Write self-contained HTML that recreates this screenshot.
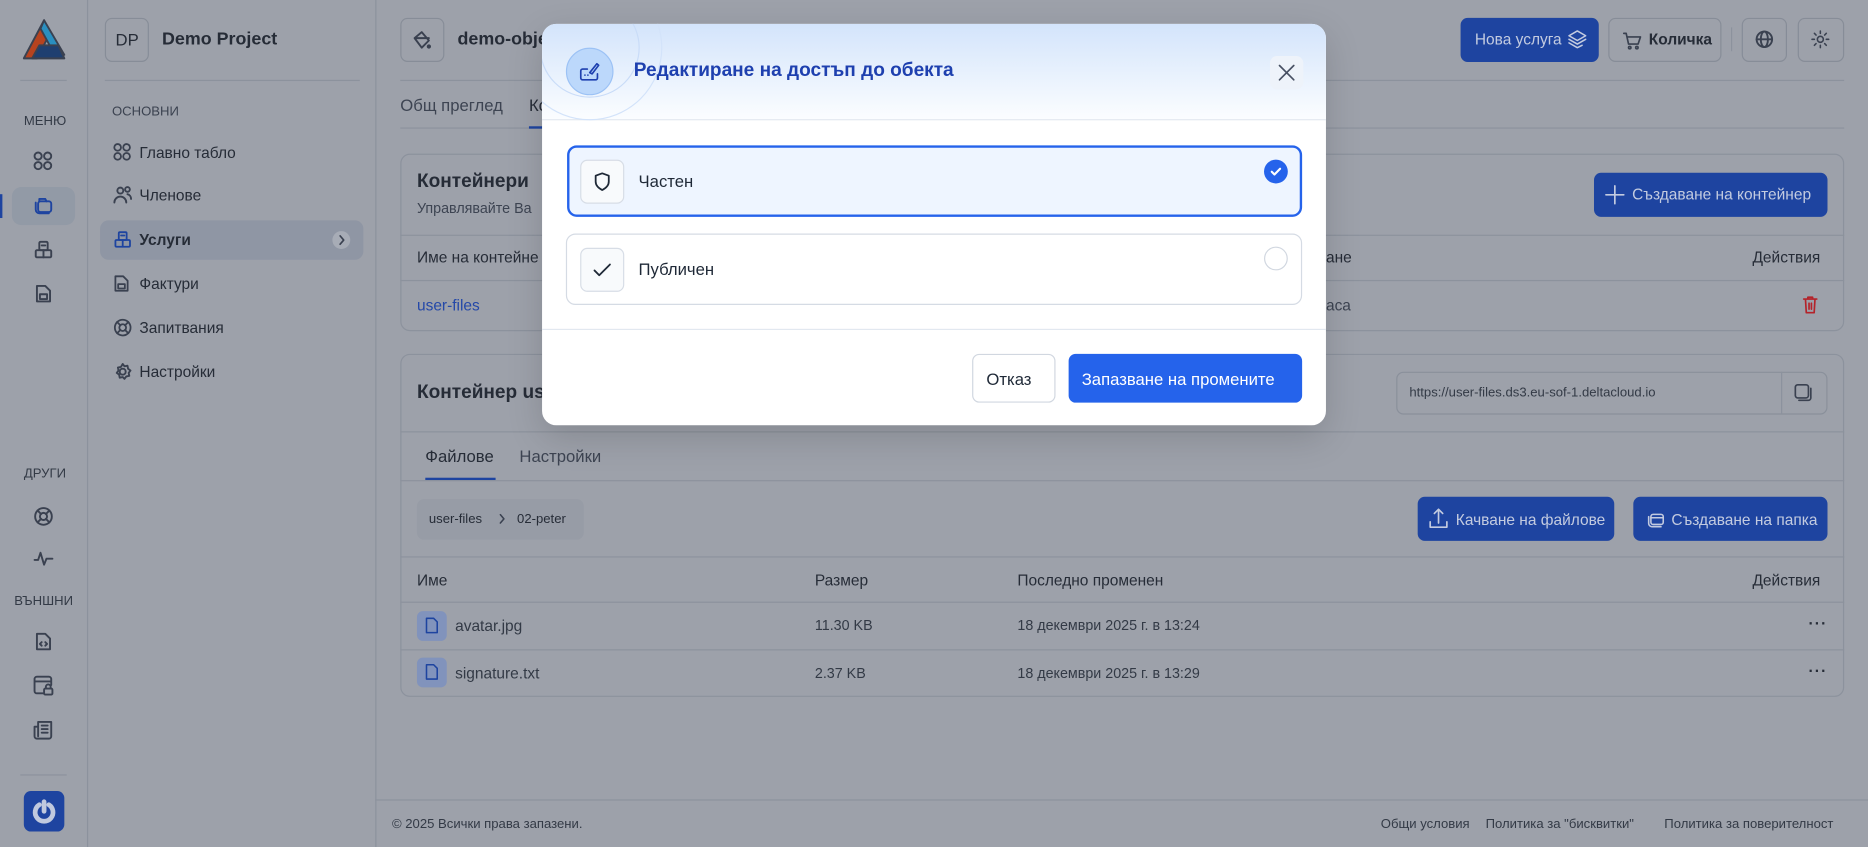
<!DOCTYPE html>
<html><head><meta charset="utf-8"><style>
*{box-sizing:border-box;margin:0;padding:0}
html,body{width:1868px;height:847px;overflow:hidden;background:#9da1aa}
#w{position:absolute;left:0;top:0;width:1568px;height:711px;transform:scale(1.19133);transform-origin:0 0;font-family:"Liberation Sans","DejaVu Sans",sans-serif;color:#262c37;background:#9da1aa}
.a{position:absolute}
.t{position:absolute;white-space:nowrap;transform:translateY(-50%)}
.hl{position:absolute;height:1px;background:#8c929d}
.vl{position:absolute;width:1px;background:#8c929d}
svg{position:absolute;fill:none;stroke:#3a4150;stroke-width:1.6;stroke-linecap:round;stroke-linejoin:round}
.btn{position:absolute;background:#1e44a0;border-radius:6px;color:#c3cbe0;font-size:13px}
.ob{position:absolute;border:1px solid #878d98;border-radius:6px}
.card{position:absolute;border:1px solid #8c929d;border-radius:8px}
</style></head><body><div id="w">
<!-- rail -->
<div class="vl" style="left:73px;top:0;height:711px"></div>
<svg style="left:19px;top:16px" width="36" height="34" viewBox="0 0 36 34" stroke="none"><polygon points="18,1 1,33 12,33 22,14" fill="#b6431f"/><polygon points="18,1 35,30 27,30 15,8" fill="#2a8fc0"/><polygon points="8,33 35,33 30,22 14,22" fill="#1f3f70"/></svg>
<div class="hl" style="left:17px;top:67px;width:39px"></div>
<div class="t" style="left:20px;top:102px;font-size:11px;color:#333a46">МЕНЮ</div>
<svg style="left:28px;top:127px" width="16" height="16" viewBox="0 0 16 16"><circle cx="4" cy="4" r="3"/><circle cx="12" cy="4" r="3"/><circle cx="4" cy="12" r="3"/><circle cx="12" cy="12" r="3"/></svg>
<div class="a" style="left:10px;top:157px;width:53px;height:32px;background:#929aa6;border-radius:8px"></div>
<div class="a" style="left:0;top:163px;width:2px;height:20px;background:#1e44a0"></div>
<svg style="left:28px;top:164px;stroke:#1e44a0" width="17" height="17" viewBox="0 0 17 17"><rect x="4" y="5" width="11" height="9" rx="2"/><path d="M2 6v6a3 3 0 0 0 3 3h8M5 5V3h5l1 2"/></svg>
<svg style="left:28px;top:201px" width="17" height="17" viewBox="0 0 17 17"><rect x="2" y="9" width="13" height="6" rx="1"/><rect x="5" y="2" width="7" height="7" rx="1"/><path d="M8.5 9v6M7 5h3"/></svg>
<svg style="left:29px;top:238px" width="15" height="17" viewBox="0 0 15 17"><path d="M2 2h7l4 4v9H2z"/><rect x="4.5" y="9" width="6" height="4"/></svg>
<div class="t" style="left:20px;top:398px;font-size:11px;color:#333a46">ДРУГИ</div>
<svg style="left:28px;top:425px" width="17" height="17" viewBox="0 0 17 17"><circle cx="8.5" cy="8.5" r="7"/><circle cx="8.5" cy="8.5" r="3"/><path d="M3.5 3.5l3 3M13.5 3.5l-3 3M3.5 13.5l3-3M13.5 13.5l-3-3"/></svg>
<svg style="left:28px;top:462px" width="17" height="14" viewBox="0 0 17 14"><path d="M1 8h3l2-6 3 10 2-5h5"/></svg>
<div class="t" style="left:12px;top:505px;font-size:11px;color:#333a46">ВЪНШНИ</div>
<svg style="left:29px;top:530px" width="15" height="17" viewBox="0 0 15 17"><path d="M2 2h7l4 4v9H2z"/><path d="M6 9l-1.5 1.5L6 12M9 9l1.5 1.5L9 12"/></svg>
<svg style="left:28px;top:567px" width="17" height="17" viewBox="0 0 17 17"><path d="M8 15H3a2 2 0 0 1-2-2V3a2 2 0 0 1 2-2h10a2 2 0 0 1 2 2v5M1 5h14"/><rect x="9" y="11" width="7" height="5" rx="1"/><path d="M10.5 11V9.5a2 2 0 0 1 4 0V11"/></svg>
<svg style="left:28px;top:604px" width="17" height="17" viewBox="0 0 17 17"><path d="M4 2h11v12a2 2 0 0 1-2 2H3a2 2 0 0 1-2-2V6h3zM4 6v8M7 5h5M7 8h5M7 11h5"/></svg>
<div class="hl" style="left:17px;top:650px;width:39px"></div>
<div class="a" style="left:20px;top:664px;width:34px;height:34px;background:#1e44a0;border-radius:6px"></div>
<svg style="left:26px;top:670px;stroke:#c0c9de;stroke-width:4" width="22" height="22" viewBox="0 0 22 22"><path d="M7 5.5a7.5 7.5 0 1 0 8 0M11 3v8"/></svg>
<!-- sidebar -->
<div class="vl" style="left:315px;top:0;height:711px"></div>
<div class="ob" style="left:88px;top:15px;width:37px;height:37px"></div>
<div class="t" style="left:97px;top:33px;font-size:14px">DP</div>
<div class="t" style="left:136px;top:33px;font-size:15px;font-weight:600">Demo Project</div>
<div class="hl" style="left:88px;top:67px;width:214px"></div>
<div class="t" style="left:94px;top:94px;font-size:11px;color:#3b4250">ОСНОВНИ</div>
<svg style="left:95px;top:120px" width="15" height="15" viewBox="0 0 16 16"><circle cx="4" cy="4" r="3"/><circle cx="12" cy="4" r="3"/><circle cx="4" cy="12" r="3"/><circle cx="12" cy="12" r="3"/></svg>
<div class="t" style="left:117px;top:128px;font-size:13px">Главно табло</div>
<svg style="left:95px;top:156px" width="16" height="15" viewBox="0 0 16 15"><circle cx="6" cy="4" r="2.5"/><path d="M1 14a5 5 0 0 1 10 0"/><circle cx="12" cy="3" r="2"/><path d="M12 7a4 4 0 0 1 3 4"/></svg>
<div class="t" style="left:117px;top:164px;font-size:13px">Членове</div>
<div class="a" style="left:84px;top:185px;width:221px;height:33px;background:#8f96a4;border-radius:7px"></div>
<svg style="left:95px;top:193px;stroke:#1e44a0" width="16" height="16" viewBox="0 0 17 17"><rect x="2" y="9" width="13" height="6" rx="1"/><rect x="5" y="2" width="7" height="7" rx="1"/><path d="M8.5 9v6M7 5h3"/></svg>
<div class="t" style="left:117px;top:201px;font-size:13px;font-weight:600">Услуги</div>
<div class="a" style="left:279px;top:194px;width:15px;height:15px;border-radius:50%;background:#a7acb6"></div>
<svg style="left:283px;top:197px;stroke-width:1.4" width="8" height="9" viewBox="0 0 8 9"><path d="M2.5 1l3 3.5-3 3.5"/></svg>
<svg style="left:95px;top:230px" width="14" height="16" viewBox="0 0 15 17"><path d="M2 2h7l4 4v9H2z"/><rect x="4.5" y="9" width="6" height="4"/></svg>
<div class="t" style="left:117px;top:238px;font-size:13px">Фактури</div>
<svg style="left:95px;top:267px" width="16" height="16" viewBox="0 0 17 17"><circle cx="8.5" cy="8.5" r="7"/><circle cx="8.5" cy="8.5" r="3"/><path d="M3.5 3.5l3 3M13.5 3.5l-3 3M3.5 13.5l3-3M13.5 13.5l-3-3"/></svg>
<div class="t" style="left:117px;top:275px;font-size:13px">Запитвания</div>
<svg style="left:95px;top:304px" width="16" height="16" viewBox="0 0 16 16"><circle cx="8" cy="8" r="2.5"/><path d="M8 1.5l1.5 2 2.5-.5.5 2.5 2 1.5-1.5 2 .5 2.5-2.5.5-1.5 2-1.5-1.5-2.5.5-.5-2.5-2-1.5 1.5-2-.5-2.5 2.5-.5z"/></svg>
<div class="t" style="left:117px;top:312px;font-size:13px">Настройки</div>
<!-- top header -->
<div class="ob" style="left:336px;top:15px;width:37px;height:37px"></div>
<svg style="left:344px;top:24px" width="20" height="20" viewBox="0 0 20 20"><path d="M4 8l6-5 6 7-6 6z M4 8h12"/><circle cx="16" cy="15" r="1" fill="#3a4150"/></svg>
<div class="t" style="left:384px;top:33px;font-size:15px;font-weight:600">demo-obje</div>
<div class="btn" style="left:1226px;top:15px;width:116px;height:37px"></div>
<div class="t" style="left:1238px;top:33px;font-size:13px;color:#c3cbe0">Нова услуга</div>
<svg style="left:1316px;top:25px;stroke:#c3cbe0;stroke-width:1.3" width="16" height="16" viewBox="0 0 16 16"><path d="M8 1l7 4-7 4-7-4zM1 8l7 4 7-4M1 11l7 4 4-2"/></svg>
<div class="ob" style="left:1350px;top:15px;width:95px;height:37px"></div>
<svg style="left:1360px;top:25px;stroke-width:1.4" width="18" height="17" viewBox="0 0 18 17"><path d="M3 3h2l2 9h8l2-6H6"/><circle cx="8" cy="15" r="1"/><circle cx="14" cy="15" r="1"/></svg>
<div class="t" style="left:1384px;top:33px;font-size:13px;font-weight:600">Количка</div>
<div class="vl" style="left:1453px;top:23px;height:20px"></div>
<div class="ob" style="left:1462px;top:15px;width:38px;height:37px"></div>
<svg style="left:1473px;top:25px" width="16" height="16" viewBox="0 0 16 16"><circle cx="8" cy="8" r="6.5"/><ellipse cx="8" cy="8" rx="3" ry="6.5"/><path d="M1.5 8h13"/></svg>
<div class="ob" style="left:1509px;top:15px;width:39px;height:37px"></div>
<svg style="left:1520px;top:25px;stroke-width:1.3" width="16" height="16" viewBox="0 0 16 16"><circle cx="8" cy="8" r="2.5"/><path d="M8 1v2M8 13v2M1 8h2M13 8h2M3 3l1.4 1.4M11.6 11.6L13 13M3 13l1.4-1.4M11.6 4.4L13 3"/></svg>
<div class="hl" style="left:336px;top:67px;width:1212px"></div>
<div class="t" style="left:336px;top:88px;font-size:14px;color:#3d4452">Общ преглед</div>
<div class="t" style="left:444px;top:88px;font-size:14px">Ко</div>
<div class="hl" style="left:336px;top:107px;width:1212px"></div>
<div class="a" style="left:444px;top:106px;width:20px;height:2px;background:#1e44a0"></div>
<!-- card 1 -->
<div class="card" style="left:336px;top:129px;width:1212px;height:149px"></div>
<div class="t" style="left:350px;top:153px;font-size:16px;font-weight:600">Контейнери</div>
<div class="t" style="left:350px;top:175px;font-size:12px;color:#3d4452">Управлявайте Ва</div>
<div class="btn" style="left:1338px;top:145px;width:196px;height:37px"></div>
<svg style="left:1347px;top:155px;stroke:#c3cbe0;stroke-width:1.4" width="17" height="17" viewBox="0 0 17 17"><path d="M8.5 1v15M1 8.5h15"/></svg>
<div class="t" style="left:1370px;top:163px;font-size:13px;color:#c3cbe0">Създаване на контейнер</div>
<div class="hl" style="left:336px;top:197px;width:1212px"></div>
<div class="t" style="left:350px;top:216px;font-size:13px">Име на контейне</div>
<div class="t" style="left:1113px;top:216px;font-size:13px">ане</div>
<div class="t" style="left:1471px;top:216px;font-size:13px">Действия</div>
<div class="hl" style="left:336px;top:235px;width:1212px"></div>
<div class="t" style="left:350px;top:256px;font-size:13px;color:#2448a8">user-files</div>
<div class="t" style="left:1113px;top:256px;font-size:13px;color:#3d4452">аса</div>
<svg style="left:1513px;top:248px;stroke:#b4232a;stroke-width:1.4" width="13" height="16" viewBox="0 0 13 16"><path d="M1 3h11M4.5 3V1.5h4V3M2.5 3l.7 11.5h6.6L10.5 3M5.5 6.5v5M7.5 6.5v5"/></svg>
<!-- card 2 -->
<div class="card" style="left:336px;top:297px;width:1212px;height:288px"></div>
<div class="t" style="left:350px;top:330px;font-size:16px;font-weight:600">Контейнер us</div>
<div class="ob" style="left:1172px;top:312px;width:362px;height:36px;border-color:#8a909b"></div>
<div class="vl" style="left:1495px;top:312px;height:36px"></div>
<div class="t" style="left:1183px;top:330px;font-size:11px;color:#333a46">https://user-files.ds3.eu-sof-1.deltacloud.io</div>
<svg style="left:1506px;top:322px;stroke-width:1.4" width="15" height="15" viewBox="0 0 15 15"><rect x="1" y="1" width="11" height="11" rx="2"/><path d="M14 4v8a2 2 0 0 1-2 2H4"/></svg>
<div class="hl" style="left:336px;top:362px;width:1212px"></div>
<div class="t" style="left:357px;top:383px;font-size:14px">Файлове</div>
<div class="t" style="left:436px;top:383px;font-size:14px;color:#3d4452">Настройки</div>
<div class="a" style="left:357px;top:401px;width:59px;height:2px;background:#1e44a0"></div>
<div class="hl" style="left:336px;top:403px;width:1212px"></div>
<div class="a" style="left:350px;top:419px;width:140px;height:34px;background:#979ca6;border-radius:6px"></div>
<div class="t" style="left:360px;top:436px;font-size:11px">user-files</div>
<svg style="left:418px;top:431px;stroke-width:1.3" width="7" height="9" viewBox="0 0 7 9"><path d="M2 1l3 3.5L2 8"/></svg>
<div class="t" style="left:434px;top:436px;font-size:11px">02-peter</div>
<div class="btn" style="left:1190px;top:417px;width:165px;height:37px"></div>
<svg style="left:1199px;top:426px;stroke:#c3cbe0;stroke-width:1.4" width="17" height="18" viewBox="0 0 17 18"><path d="M8.5 13V1.5M5 5l3.5-3.5L12 5M1.5 12v4.5h14V12"/></svg>
<div class="t" style="left:1222px;top:436px;font-size:13px;color:#c3cbe0">Качване на файлове</div>
<div class="btn" style="left:1371px;top:417px;width:163px;height:37px"></div>
<svg style="left:1382px;top:428px;stroke:#c3cbe0;stroke-width:1.4" width="16" height="16" viewBox="0 0 17 17"><rect x="4" y="4" width="11" height="9" rx="2"/><path d="M2 6v6a3 3 0 0 0 3 3h8M4 7h11"/></svg>
<div class="t" style="left:1403px;top:436px;font-size:13px;color:#c3cbe0">Създаване на папка</div>
<div class="hl" style="left:336px;top:467px;width:1212px"></div>
<div class="t" style="left:350px;top:487px;font-size:13px">Име</div>
<div class="t" style="left:684px;top:487px;font-size:13px">Размер</div>
<div class="t" style="left:854px;top:487px;font-size:13px">Последно променен</div>
<div class="t" style="left:1471px;top:487px;font-size:13px">Действия</div>
<div class="hl" style="left:336px;top:505px;width:1212px"></div>
<div class="a" style="left:350px;top:513px;width:25px;height:25px;background:#8193bc;border-radius:5px"></div>
<svg style="left:357px;top:518px;stroke:#1e44a0;stroke-width:1.3" width="11" height="14" viewBox="0 0 11 14"><path d="M1 1h6l3 3v9H1z"/></svg>
<div class="t" style="left:382px;top:525px;font-size:13px;color:#333a46">avatar.jpg</div>
<div class="t" style="left:684px;top:525px;font-size:12px;color:#333a46">11.30 KB</div>
<div class="t" style="left:854px;top:525px;font-size:12px;color:#333a46">18 декември 2025 г. в 13:24</div>
<div class="t" style="left:1518px;top:523px;font-size:13px;font-weight:700;letter-spacing:1px">···</div>
<div class="hl" style="left:336px;top:545px;width:1212px"></div>
<div class="a" style="left:350px;top:552px;width:25px;height:25px;background:#8193bc;border-radius:5px"></div>
<svg style="left:357px;top:557px;stroke:#1e44a0;stroke-width:1.3" width="11" height="14" viewBox="0 0 11 14"><path d="M1 1h6l3 3v9H1z"/></svg>
<div class="t" style="left:382px;top:565px;font-size:13px;color:#333a46">signature.txt</div>
<div class="t" style="left:684px;top:565px;font-size:12px;color:#333a46">2.37 KB</div>
<div class="t" style="left:854px;top:565px;font-size:12px;color:#333a46">18 декември 2025 г. в 13:29</div>
<div class="t" style="left:1518px;top:563px;font-size:13px;font-weight:700;letter-spacing:1px">···</div>
<!-- footer -->
<div class="hl" style="left:315px;top:671px;width:1253px"></div>
<div class="t" style="left:329px;top:692px;font-size:11px;color:#333a46">© 2025 Всички права запазени.</div>
<div class="t" style="left:1159px;top:692px;font-size:11px;color:#333a46">Общи условия</div>
<div class="t" style="left:1247px;top:692px;font-size:11px;color:#333a46">Политика за "бисквитки"</div>
<div class="t" style="left:1397px;top:692px;font-size:11px;color:#333a46">Политика за поверителност</div>
<!-- modal -->
<div class="a" style="left:455px;top:20px;width:658px;height:337px;background:#fff;border-radius:12px;overflow:hidden;box-shadow:0 10px 30px rgba(0,0,0,.15)">
 <div class="a" style="left:0;top:0;width:658px;height:81px;background:linear-gradient(180deg,#d3e4fb,#fbfdff);border-bottom:1px solid #e2e8f0"></div>
 <div class="a" style="left:-21px;top:-41px;width:122px;height:122px;border-radius:50%;border:1px solid #d3e3fa"></div>
 <div class="a" style="left:-2px;top:-22px;width:84px;height:84px;border-radius:50%;border:1px solid #c9dcf8"></div>
 <div class="a" style="left:20px;top:20px;width:40px;height:40px;border-radius:50%;background:#bcd8fb;border:1px solid #9cc2f5"></div>
 <svg style="left:31px;top:31px;stroke:#1e40af;stroke-width:1.4" width="18" height="18" viewBox="0 0 18 18"><path d="M7 7H3a1.5 1.5 0 0 0-1.5 1.5v6A1.5 1.5 0 0 0 3 16h11a1.5 1.5 0 0 0 1.5-1.5V11M9 10l6-7.5 1.5 1.3L11 11zM5 12v.1M7.5 12v.1"/></svg>
 <div class="t" style="left:77px;top:40px;font-size:16px;font-weight:600;color:#1e40af">Редактиране на достъп до обекта</div>
 <div class="a" style="left:611px;top:27px;width:28px;height:28px;border-radius:6px;background:#eef3fa"></div>
 <svg style="left:617px;top:33px;stroke:#475063;stroke-width:1.4" width="16" height="16" viewBox="0 0 16 16"><path d="M2 2l12 12M14 2L2 14"/></svg>
 <div class="a" style="left:21px;top:102px;width:617px;height:60px;border:2px solid #2563eb;border-radius:8px;background:#eef5ff"></div>
 <div class="a" style="left:32px;top:114px;width:37px;height:37px;border:1px solid #d7dde6;border-radius:6px;background:#f8fafc"></div>
 <svg style="left:43px;top:124px;stroke:#1f2937;stroke-width:1.5" width="15" height="17" viewBox="0 0 15 17"><path d="M7.5 1.5L13 3.5v5c0 3.5-2.5 5.5-5.5 7-3-1.5-5.5-3.5-5.5-7v-5z"/></svg>
 <div class="t" style="left:81px;top:132px;font-size:14px;color:#1f2937">Частен</div>
 <div class="a" style="left:606px;top:114px;width:20px;height:20px;border-radius:50%;background:#2563eb"></div>
 <svg style="left:610px;top:118px;stroke:#fff;stroke-width:1.8" width="12" height="12" viewBox="0 0 12 12"><path d="M2.5 6.2l2.3 2.3 4.7-4.8"/></svg>
 <div class="a" style="left:20px;top:176px;width:618px;height:60px;border:1px solid #d5dbe4;border-radius:8px"></div>
 <div class="a" style="left:32px;top:188px;width:37px;height:37px;border:1px solid #d7dde6;border-radius:6px;background:#f8fafc"></div>
 <svg style="left:42px;top:198px;stroke:#1f2937;stroke-width:1.5" width="17" height="17" viewBox="0 0 17 17"><path d="M2 9l4 4 9-9"/></svg>
 <div class="t" style="left:81px;top:206px;font-size:14px;color:#1f2937">Публичен</div>
 <div class="a" style="left:606px;top:187px;width:20px;height:20px;border-radius:50%;border:1px solid #d1d7e0"></div>
 <div class="a" style="left:0;top:256px;width:658px;height:1px;background:#e2e8f0"></div>
 <div class="a" style="left:361px;top:277px;width:70px;height:41px;border:1px solid #d1d7e0;border-radius:6px"></div>
 <div class="t" style="left:373px;top:298px;font-size:14px;color:#1f2937">Отказ</div>
 <div class="a" style="left:442px;top:277px;width:196px;height:41px;background:#2563eb;border-radius:6px"></div>
 <div class="t" style="left:453px;top:298px;font-size:14px;color:#fff">Запазване на промените</div>
</div>
</div></body></html>
